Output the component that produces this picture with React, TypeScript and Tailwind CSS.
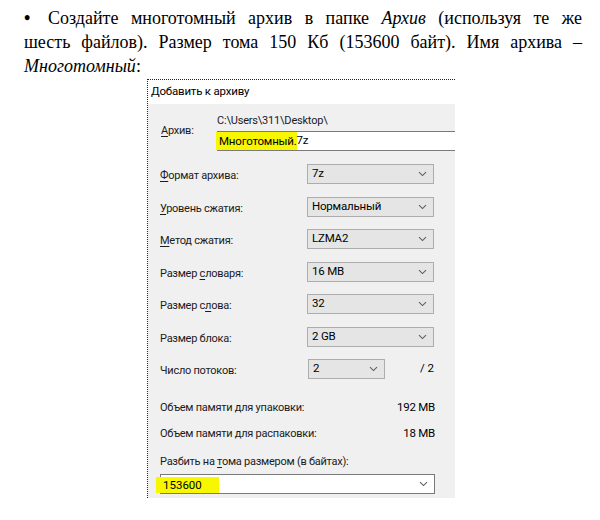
const ui = { fontFamily: 'Roboto, "Liberation Sans", Arial, sans-serif' };
const serif = { fontFamily: '"Liberation Serif", "Times New Roman", serif' };

function Chevron() {
  return (
    <svg width="9" height="6" viewBox="0 0 9 6" className="shrink-0">
      <path d="M1 1.2 L4.5 4.6 L8 1.2" fill="none" stroke="#5f5f5f" strokeWidth="1.1" />
    </svg>
  );
}

function Select({ value, wide = true }: { value: string; wide?: boolean }) {
  return (
    <div
      className={`${wide ? 'w-[127px]' : 'w-[77px]'} h-[20px] border border-[#adadad] bg-[#e5e5e5] flex items-center justify-between pl-[4px] pr-[6px] text-[11.5px] tracking-[-0.2px] text-black`}
    >
      <span>{value}</span>
      <Chevron />
    </div>
  );
}

function Label({ before = '', u, after }: { before?: string; u: string; after: string }) {
  return (
    <span className="text-[11px] tracking-[-0.25px] text-[#1b1b1b]">
      {before}
      <span className="underline underline-offset-2">{u}</span>
      {after}
    </span>
  );
}

const rows: { before?: string; u: string; after: string; value: string }[] = [
  { u: 'Ф', after: 'ормат архива:', value: '7z' },
  { u: 'У', after: 'ровень сжатия:', value: 'Нормальный' },
  { u: 'М', after: 'етод сжатия:', value: 'LZMA2' },
  { before: 'Размер ', u: 'с', after: 'ловаря:', value: '16 MB' },
  { before: 'Размер с', u: 'л', after: 'ова:', value: '32' },
  { before: 'Размер блока:', u: '', after: '', value: '2 GB' },
];

// each paragraph line is justified on its own so the breaks match the page
const line = 'block text-justify [text-align-last:justify]';

export default function App() {
  return (
    <div className="w-[600px] h-[520px] bg-white overflow-hidden">
      <div style={serif} className="pt-[6px] pl-[24px] w-[582px] text-[18px] leading-[24px] text-black">
        <span className={line}>
          <span className="inline-block w-[24px] font-bold">•</span>
          Создайте многотомный архив в папке <i>Архив</i> (используя те же
        </span>
        <span className={line}>шесть файлов). Размер тома 150 Кб (153600 байт). Имя архива –</span>
        <span className="block">
          <i>Многотомный</i>:
        </span>
      </div>

      <div style={ui} className="mt-px ml-[147px] w-[308px] border-l border-t border-dotted border-[#222]">
        <div className="h-[24px] bg-white flex items-center pl-[3px] text-[11.5px] tracking-[-0.2px] text-black">
          Добавить к архиву
        </div>

        <div className="bg-[#f0f0f0] h-[394px] pl-[12px] pt-[9px] flex flex-col">
          <div className="flex">
            <div className="w-[57px] pt-[4px]">
              <span className="pl-[1px]">
                <Label u="А" after="рхив:" />
              </span>
            </div>
            <div className="flex-1 flex flex-col">
              <span className="text-[11px] tracking-[-0.2px] leading-[15px] text-[#1b1b1b]">C:\Users\311\Desktop\</span>
              <div className="mt-[3px] h-[20px] border border-r-0 border-[#7a7a7a] bg-white flex items-center text-[11.5px] tracking-[-0.2px] text-black">
                <span className="-ml-[2px] bg-[#f7f700] h-[18px] leading-[18px] pl-[3px]">Многотомный.</span>
                <span>7z</span>
              </div>
            </div>
          </div>

          <div className="mt-[13px] flex flex-col gap-[12.5px] w-[275px]">
            {rows.map((r) => (
              <div key={r.value} className="flex items-center h-[20px]">
                <div className="w-[147px]">
                  <Label before={r.before} u={r.u} after={r.after} />
                </div>
                <Select value={r.value} />
              </div>
            ))}
            <div className="flex items-center h-[20px]">
              <div className="w-[148px]">
                <span className="text-[11px] tracking-[-0.25px] text-[#1b1b1b]">Число потоков:</span>
              </div>
              <Select value="2" wide={false} />
              <span className="ml-auto pr-[1px] text-[11.5px] text-black">/ 2</span>
            </div>
          </div>

          <div className="w-[275px] text-[11px] tracking-[-0.25px] leading-[15px] text-[#1b1b1b]">
            <div className="mt-[20.5px] flex justify-between">
              <span>Объем памяти для упаковки:</span>
              <span className="text-black text-[11.5px]">192 MB</span>
            </div>
            <div className="mt-[11px] flex justify-between">
              <span>Объем памяти для распаковки:</span>
              <span className="text-black text-[11.5px]">18 MB</span>
            </div>
            <div className="mt-[13px]">
              <Label before="Разбить на " u="т" after="ома размером (в байтах):" />
            </div>
          </div>

          <div className="relative mt-[5.5px] w-[275px] h-[20px] border border-[#7a7a7a] bg-white flex items-center justify-end pr-[6px]">
            <span className="absolute left-[-5px] top-[2px] h-[16px] w-[63px] bg-[#f7f700] pl-[7px] text-[11.5px] leading-[16px] text-black">
              153600
            </span>
            <Chevron />
          </div>
        </div>
      </div>
    </div>
  );
}
